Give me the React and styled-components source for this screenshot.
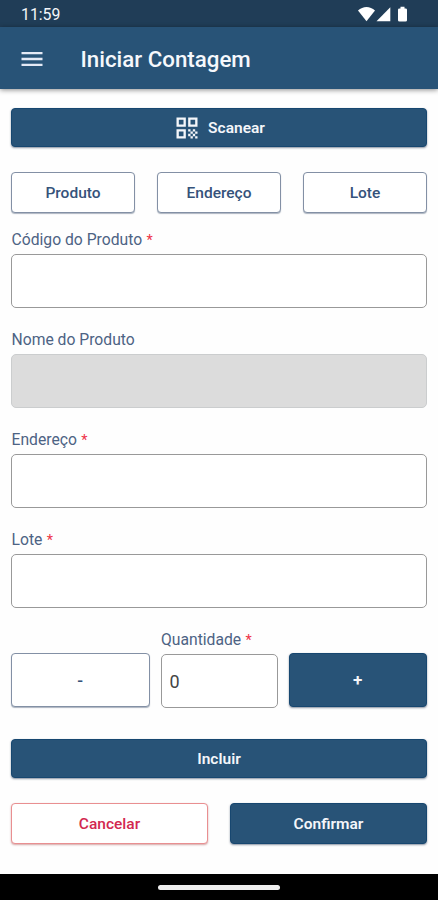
import React from 'react';
import styled, { createGlobalStyle, css } from 'styled-components';
import { MdMenu, MdQrCode } from 'react-icons/md';

const colors = {
  primary: '#285377',
  primaryDark: '#203d57',
  outline: '#8390a5',
  label: '#4d6384',
  danger: '#d22850',
  dangerOutline: '#e98f91',
};

const GlobalStyle = createGlobalStyle`
  * {
    box-sizing: border-box;
  }

  body {
    margin: 0;
    background: #fefefe;
    font-family: Roboto, sans-serif;
  }

  button,
  input {
    margin: 0;
    font-family: inherit;
  }
`;

const Screen = styled.div`
  display: flex;
  flex-direction: column;
  width: 438px;
  height: 900px;
  overflow: hidden;
`;

const StatusBar = styled.div`
  display: flex;
  flex: none;
  align-items: center;
  justify-content: space-between;
  height: 27px;
  padding: 2px 29px 0 21px;
  background: ${colors.primaryDark};
  color: #f4f6fa;
  font-size: 15.8px;
`;

const Header = styled.header`
  display: flex;
  flex: none;
  align-items: center;
  gap: 35px;
  height: 62px;
  padding: 2px 18px 0 17.5px;
  background: ${colors.primary};
  color: #f6f8fc;
  box-shadow: 0 1px 5px rgba(0, 0, 0, 0.45);
`;

const MenuIcon = styled(MdMenu)`
  color: #e4e9f5;
`;

const Title = styled.h1`
  margin: 0;
  font-size: 22.3px;
  font-weight: 500;
  line-height: 28px;
`;

const Form = styled.main`
  flex: 1;
  padding: 19px 11px 0;
`;

const Row = styled.div`
  display: flex;
  align-items: ${({ $align }) => $align || 'stretch'};
  gap: ${({ $gap }) => $gap}px;
  margin-top: ${({ $top }) => $top}px;
`;

const variants = {
  filled: css`
    border: 1px solid #174770;
    background: ${colors.primary};
    color: #f4f6fa;
    font-weight: 600;
    box-shadow: 0 1px 2px rgba(20, 40, 70, 0.5);
  `,
  outlined: css`
    border: 1px solid ${colors.outline};
    background: #fff;
    color: #35527a;
    font-weight: 500;
    box-shadow: 0 1px 1px rgba(50, 70, 100, 0.4);
  `,
  danger: css`
    border: 1.5px solid ${colors.dangerOutline};
    background: #fff;
    color: ${colors.danger};
    font-weight: 500;
    box-shadow: 0 1px 2px rgba(160, 60, 60, 0.45);
  `,
};

const Button = styled.button`
  display: flex;
  flex: 1;
  align-items: center;
  justify-content: center;
  gap: 7px;
  height: ${({ $height }) => $height || 41}px;
  padding: 0;
  border-radius: 4px;
  font-size: 15.5px;
  ${({ $variant }) => variants[$variant || 'filled']}
`;

const StepButton = styled(Button)`
  margin-bottom: 1px;
  font-size: 17px;
`;

const Field = styled.label`
  display: block;
  margin-top: ${({ $top }) => $top || 0}px;
  width: ${({ $width }) => $width || '100%'};
`;

const Label = styled.span`
  display: block;
  height: 27px;
  padding-left: 0.5px;
  color: ${colors.label};
  font-size: 15.7px;
  line-height: 25.6px;
`;

const Required = styled.span`
  margin-left: 0.5px;
  color: #ee3348;
  font-size: 14.5px;
`;

const Input = styled.input`
  display: block;
  width: 100%;
  height: 54px;
  padding: 0 8px;
  border: 1px solid #999;
  border-radius: 5px;
  background: #fff;
  color: #444;
  font-size: 18px;

  &:disabled {
    border-color: #cbcdce;
    background: #dcdcdc;
  }
`;

const NavBar = styled.div`
  display: flex;
  flex: none;
  justify-content: center;
  height: 26px;
  padding-top: 11px;
  background: #000;
`;

const HomeIndicator = styled.div`
  width: 122px;
  height: 5px;
  border-radius: 3px;
  background: #eee;
`;

const StatusIcons = () => (
  <svg width="52" height="18" viewBox="0 0 52 18" fill="#fff">
    <path d="M1 4.6C6-.3 13-.3 18 4.6L9.5 15.2Z" />
    <path d="M19.5 15.2 33.3 1.2v14Z" />
    <path d="M43.5 .8h4v1.7h1q1.5 0 1.5 1.3v10.4q0 1.3-1.5 1.3h-6q-1.5 0-1.5-1.3V3.8q0-1.3 1.5-1.3h1Z" />
  </svg>
);

const FormField = ({ label, required, top, width, ...input }) => (
  <Field $top={top} $width={width}>
    <Label>
      {label} {required && <Required>*</Required>}
    </Label>
    <Input {...input} />
  </Field>
);

const App = () => (
  <>
    <GlobalStyle />
    <Screen>
      <StatusBar>
        <span>11:59</span>
        <StatusIcons />
      </StatusBar>
      <Header>
        <MenuIcon size={28} />
        <Title>Iniciar Contagem</Title>
      </Header>

      <Form>
        <Row>
          <Button $height={39}>
            <MdQrCode size={28} />
            Scanear
          </Button>
        </Row>

        <Row $gap={22} $top={25}>
          <Button $variant="outlined">Produto</Button>
          <Button $variant="outlined">Endereço</Button>
          <Button $variant="outlined">Lote</Button>
        </Row>

        <FormField label="Código do Produto" required top={13.5} />
        <FormField label="Nome do Produto" disabled top={19.2} />
        <FormField label="Endereço" required top={19.2} />
        <FormField label="Lote" required top={19.2} />

        <Row $gap={11} $top={19.2} $align="flex-end">
          <StepButton $variant="outlined" $height={54}>
            -
          </StepButton>
          <FormField label="Quantidade" required width="117px" defaultValue="0" />
          <StepButton $height={54}>+</StepButton>
        </Row>

        <Row $top={31}>
          <Button $height={39}>Incluir</Button>
        </Row>

        <Row $gap={22} $top={25}>
          <Button $variant="danger">Cancelar</Button>
          <Button>Confirmar</Button>
        </Row>
      </Form>

      <NavBar>
        <HomeIndicator />
      </NavBar>
    </Screen>
  </>
);

export default App;
